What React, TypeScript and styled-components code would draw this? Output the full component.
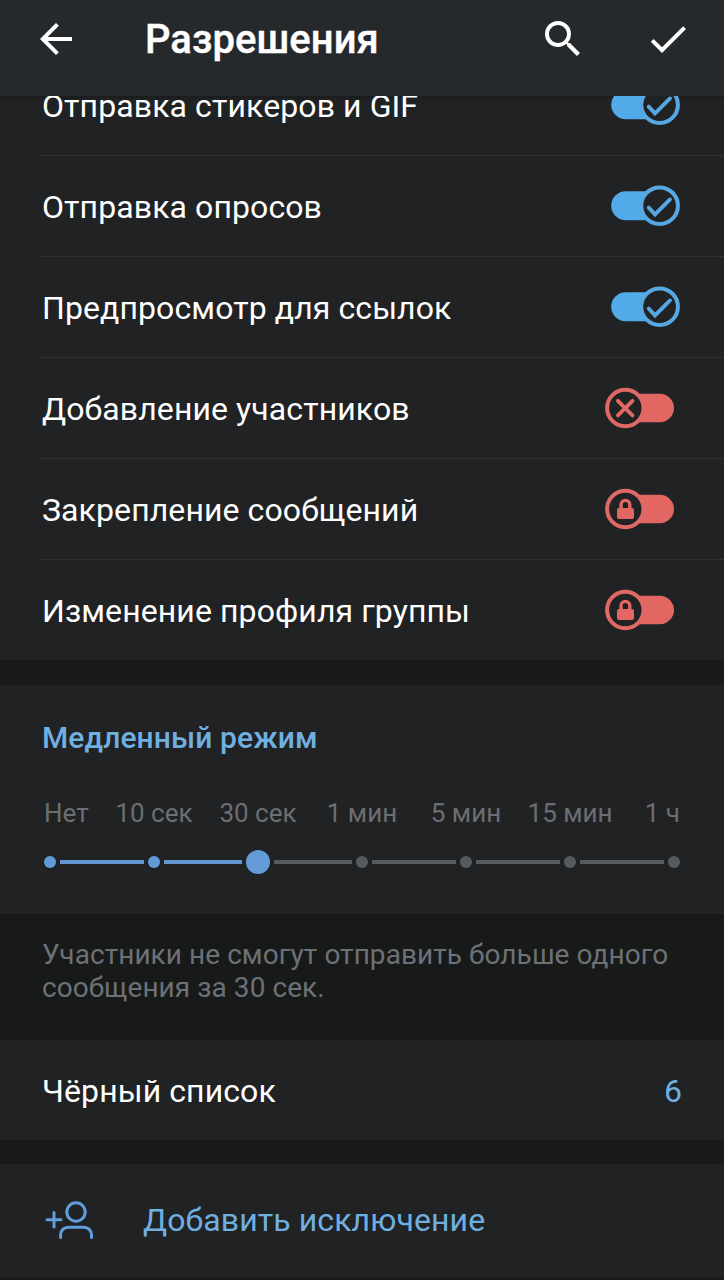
import React from "react";
import styled, { createGlobalStyle } from "styled-components";

const color = {
  header: "#25292c",
  panel: "#202224",
  gap: "#181a19",
  divider: "#2f3133",
  on: "#52abe8",
  off: "#e26762",
  accent: "#6fb0e0",
  track: "#6196d0",
  idle: "#565b60",
};

const GlobalStyle = createGlobalStyle`
  *, *::before, *::after { box-sizing: border-box; }
  body { margin: 0; background: ${color.gap}; }
`;

const Screen = styled.div`
  display: flex;
  flex-direction: column;
  width: 724px;
  height: 1280px;
  overflow: hidden;
  background: ${color.gap};
  color: #fff;
  font-family: Roboto, "Liberation Sans", sans-serif;
`;

const Header = styled.header`
  display: flex;
  align-items: flex-start;
  flex: none;
  height: 96px;
  padding: 15px 32px 0;
  background: ${color.header};
`;

const Title = styled.h1`
  flex: 1;
  margin: 1px 0 0 65px;
  font-size: 40px;
  font-weight: 500;
  line-height: 48px;
  letter-spacing: 0.05px;
  -webkit-text-stroke: 0.4px #fff;
`;

const Actions = styled.div`
  display: flex;
  gap: 57px;
`;

const Glyph = styled.svg`
  display: block;
  width: 48px;
  height: 48px;
  fill: #fff;
`;

const List = styled.section`
  flex: none;
  height: 564px;
  overflow: hidden;
  background: linear-gradient(#1a1c1d, ${color.panel} 5px);
`;

const ListInner = styled.div`
  margin-top: -41px;
`;

const Row = styled.div`
  display: flex;
  justify-content: space-between;
  height: 101px;
  margin-left: 40px;
  padding: 0 38px 0 2px;
  border-bottom: 1px solid ${color.divider};

  &:last-child { border-bottom: 0; }
`;

const Label = styled.span`
  padding-top: 32px;
  font-size: 32px;
  line-height: 38px;
  white-space: nowrap;
  letter-spacing: 0.1px;
`;

const SwitchArt = styled.svg`
  display: block;
  width: 82px;
  height: 44px;
  margin-top: 28px;
`;

const Panel = styled.section<{ $height: number; $gap: number }>`
  flex: none;
  height: ${(p) => p.$height}px;
  margin-bottom: ${(p) => p.$gap}px;
  background: ${color.panel};
`;

const SlowMode = styled(Panel)`
  margin-top: 25px;
  padding: 35px 42px 0;
`;

const SectionTitle = styled.h2`
  margin: 0;
  font-size: 30px;
  font-weight: 500;
  line-height: 36px;
  letter-spacing: 0.1px;
  color: ${color.accent};
`;

const Stops = styled.div`
  display: grid;
  grid-template-columns: 60px repeat(5, 104px) 60px;
  margin-top: 41px;
  font-size: 26px;
  line-height: 32px;
  color: #6b6e72;
`;

const Stop = styled.span`
  text-align: center;
  white-space: nowrap;
  &:first-child { text-align: left; padding-left: 2px; }
  &:last-child { text-align: right; padding-right: 2px; }
`;

const Slider = styled.div`
  display: flex;
  align-items: center;
  gap: 4px;
  height: 24px;
  margin: 21px 2px 0;
`;

const Dot = styled.i<{ $state: "past" | "current" | "next" }>`
  flex: none;
  width: ${(p) => (p.$state === "current" ? 24 : 12)}px;
  height: ${(p) => (p.$state === "current" ? 24 : 12)}px;
  border-radius: 50%;
  background: ${(p) => (p.$state === "next" ? color.idle : "#629bd8")};
`;

const Segment = styled.i<{ $filled: boolean; $width: number }>`
  flex: none;
  width: ${(p) => p.$width}px;
  height: 4px;
  background: ${(p) => (p.$filled ? color.track : color.idle)};
`;

const Hint = styled.p`
  flex: none;
  height: 126px;
  margin: 0;
  padding: 24px 42px 0;
  font-size: 28px;
  line-height: 33px;
  letter-spacing: 0.06px;
  color: #6c7178;
`;

const Blacklist = styled(Panel)`
  display: flex;
  justify-content: space-between;
  padding: 0 42px;
`;

const Count = styled(Label)`
  color: ${color.accent};
`;

const AddException = styled(Panel)`
  display: flex;
  padding: 0 42px 0 40px;
  color: ${color.accent};
`;

const AddLabel = styled(Label)`
  padding-top: 37px;
`;

const AddIcon = styled.svg`
  width: 60px;
  height: 56px;
  margin: 28px 43px 0 0;
  fill: none;
  stroke: #609fdb;
  stroke-width: 3;
  stroke-linecap: round;
`;

type State = "on" | "off" | "locked";

function Switch({ state }: { state: State }) {
  if (state === "on") {
    return (
      <SwitchArt viewBox="0 0 82 44">
        <rect x="7.2" y="7.2" width="58" height="29" rx="14.5" fill={color.on} />
        <circle cx="55.6" cy="21.7" r="18.3" fill={color.panel} stroke="#57a8e2" strokeWidth="4" />
        <path
          d="M44.7 23.6 51 30.4 66 15.4"
          fill="none"
          stroke="#57a8e2"
          strokeWidth="3.8"
          strokeLinecap="round"
          strokeLinejoin="miter"
        />
      </SwitchArt>
    );
  }
  return (
    <SwitchArt viewBox="0 0 82 44">
      <rect x="12" y="7.7" width="58" height="28.6" rx="14.3" fill={color.off} />
      <circle cx="21.3" cy="22" r="18.2" fill={color.panel} stroke="#df6a65" strokeWidth="4" />
      {state === "off" ? (
        <path
          d="M13.9 14.8 28.5 29.4M28.5 14.8 13.9 29.4"
          stroke="#df6a65"
          strokeWidth="3.8"
          strokeLinecap="round"
        />
      ) : (
        <>
          <rect x="13" y="21" width="17" height="11" rx="2" fill={color.off} />
          <path
            d="M17 22v-4.2a4.4 4.4 0 0 1 8.8 0V22"
            fill="none"
            stroke={color.off}
            strokeWidth="3.4"
          />
        </>
      )}
    </SwitchArt>
  );
}

const permissions: { label: string; state: State }[] = [
  { label: "Отправка стикеров и GIF", state: "on" },
  { label: "Отправка опросов", state: "on" },
  { label: "Предпросмотр для ссылок", state: "on" },
  { label: "Добавление участников", state: "off" },
  { label: "Закрепление сообщений", state: "locked" },
  { label: "Изменение профиля группы", state: "locked" },
];

const stops = ["Нет", "10 сек", "30 сек", "1 мин", "5 мин", "15 мин", "1 ч"];
const selected = 2;

export default function App() {
  return (
    <>
      <GlobalStyle />
      <Screen>
        <Header>
          <Glyph viewBox="0 0 24 24">
            <path d="M20 11H7.83l5.59-5.59L12 4l-8 8 8 8 1.41-1.41L7.83 13H20v-2z" />
          </Glyph>
          <Title>Разрешения</Title>
          <Actions>
            <Glyph viewBox="0 0 24 24">
              <path d="M15.5 14h-.79l-.28-.27A6.471 6.471 0 0 0 16 9.5 6.5 6.5 0 1 0 9.5 16c1.61 0 3.09-.59 4.23-1.57l.27.28v.79l5 4.99L20.49 19l-4.99-5zm-6 0C7.01 14 5 11.99 5 9.5S7.01 5 9.5 5 14 7.01 14 9.5 11.99 14 9.5 14z" />
            </Glyph>
            <Glyph viewBox="0 0 24 24">
              <path d="M9 16.17 4.83 12l-1.42 1.41L9 19 21 7l-1.41-1.41z" />
            </Glyph>
          </Actions>
        </Header>

        <List>
          <ListInner>
            {permissions.map((p) => (
              <Row key={p.label}>
                <Label>{p.label}</Label>
                <Switch state={p.state} />
              </Row>
            ))}
          </ListInner>
        </List>

        <SlowMode $height={229} $gap={0}>
          <SectionTitle>Медленный режим</SectionTitle>
          <Stops>
            {stops.map((s) => (
              <Stop key={s}>{s}</Stop>
            ))}
          </Stops>
          <Slider>
            {stops.map((s, i) => (
              <React.Fragment key={s}>
                {i > 0 && (
                  <Segment
                    $filled={i <= selected}
                    $width={i === selected || i === selected + 1 ? 78 : 84}
                  />
                )}
                <Dot $state={i < selected ? "past" : i === selected ? "current" : "next"} />
              </React.Fragment>
            ))}
          </Slider>
        </SlowMode>

        <Hint>
          Участники не смогут отправить больше одного
          <br />
          сообщения за 30 сек.
        </Hint>

        <Blacklist $height={100} $gap={24}>
          <Label>Чёрный список</Label>
          <Count>6</Count>
        </Blacklist>

        <AddException $height={113} $gap={0}>
          <AddIcon viewBox="0 0 60 56">
            <path d="M7 27.7h14M14 20.5v14.4" />
            <circle cx="36" cy="20" r="9.2" />
            <path d="M20.6 45.5v-2.5c0-4.5 3.3-7.8 7.8-7.8h15.3c4.5 0 7.8 3.3 7.8 7.8v2.5" />
          </AddIcon>
          <AddLabel>Добавить исключение</AddLabel>
        </AddException>
      </Screen>
    </>
  );
}
